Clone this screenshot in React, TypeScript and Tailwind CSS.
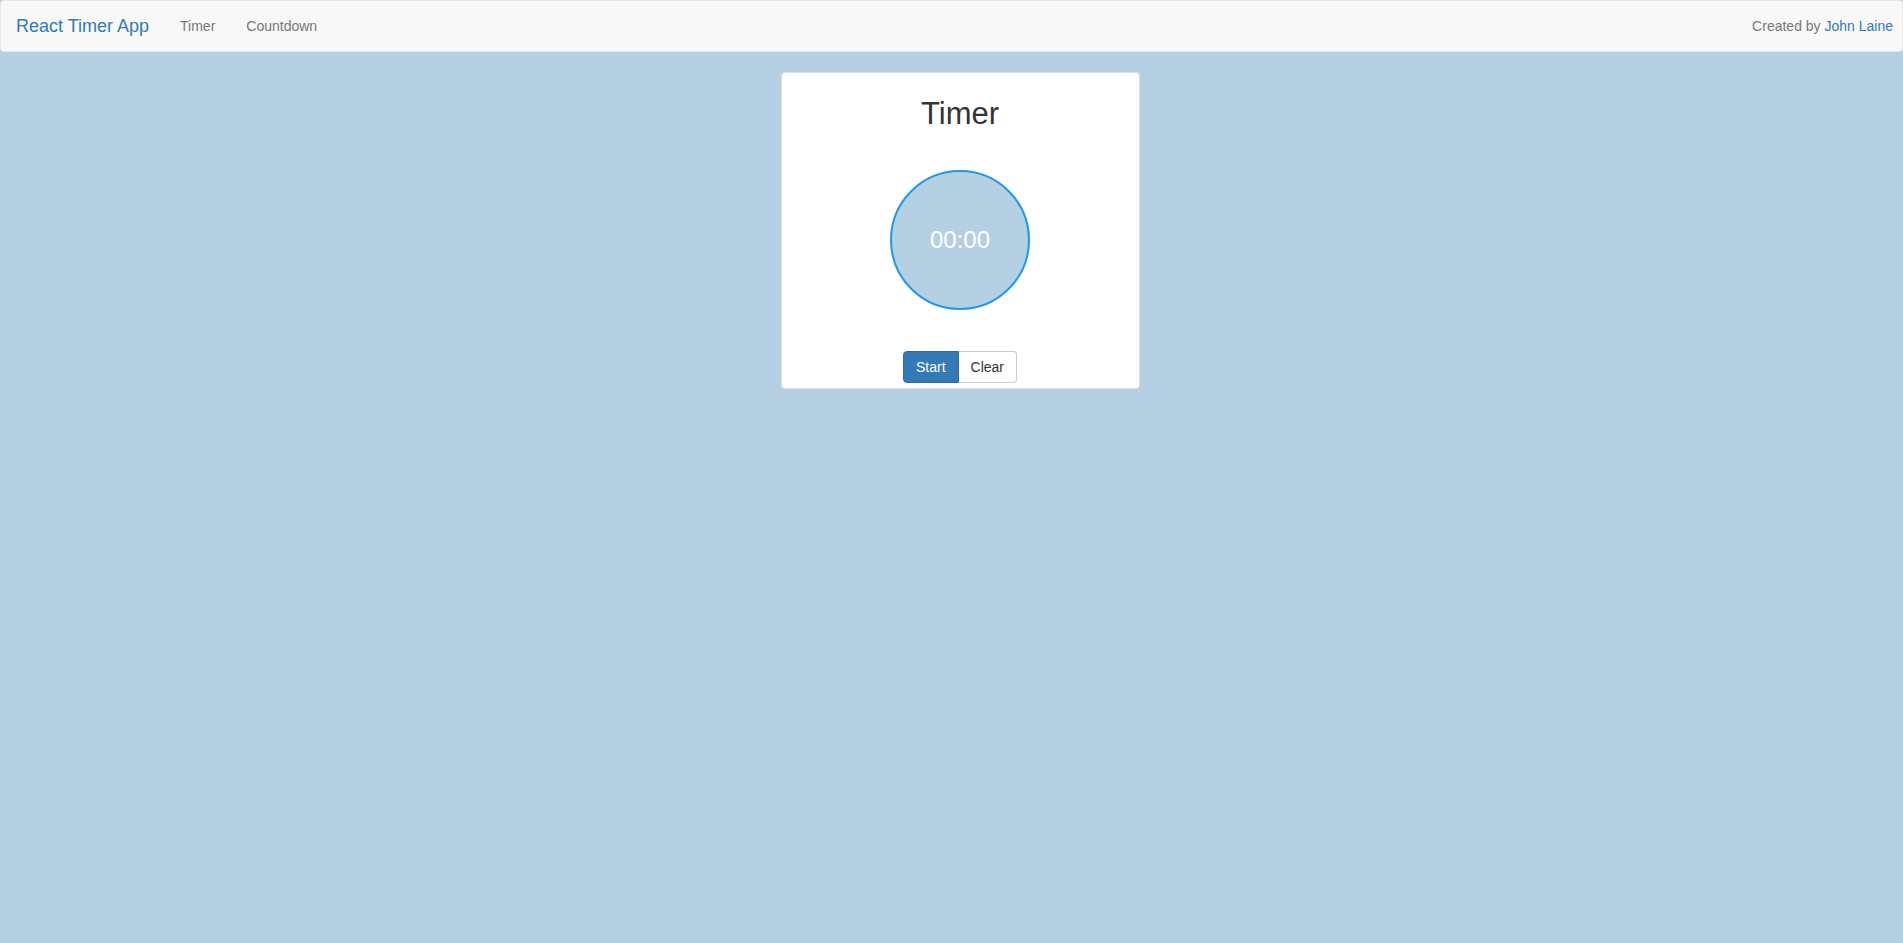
import React from "react";

function Navigation() {
  return (
    <nav className="flex h-[52px] items-center justify-between rounded-[4px] border border-[#e7e7e7] bg-[#f8f8f8]">
      <div className="flex items-center">
        <a className="px-[15px] text-[18px] text-[#337ab7]">React Timer App</a>
        <a className="pl-[16px] pr-[15px] text-[14px] text-[#777]">Timer</a>
        <a className="pl-[16px] pr-[15px] text-[14px] text-[#777]">Countdown</a>
      </div>
      <div className="pr-[9px] text-[14px] text-[#777]">
        Created by <a className="text-[#337ab7]">John Laine</a>
      </div>
    </nav>
  );
}

function App() {
  return (
    <div
      className="min-h-screen bg-[#b5d0e2]"
      style={{ fontFamily: '"Liberation Sans", Arial, sans-serif' }}
    >
      <Navigation />

      <div className="mt-[20px] flex justify-center pl-[17px]">
        <div className="flex w-[359px] flex-col items-center rounded-[4px] border border-[#ddd] bg-white pb-[5px] pt-[24px]">
          {/* Title */}
          <h1 className="text-[31px] leading-[34px] text-[#333]">Timer</h1>

          {/* Clock */}
          <div className="mt-[39px] flex h-[140px] w-[140px] items-center justify-center rounded-full border-2 border-[#2098e9] bg-[#b5d0e2]">
            <span className="text-[24px] text-white">00:00</span>
          </div>

          {/* Controls */}
          <div className="mt-[41px] flex">
            <button className="h-[32px] rounded-l-[4px] border border-[#2e6da4] bg-[#337ab7] px-[12px] text-[14px] text-white">
              Start
            </button>
            <button className="h-[32px] rounded-r-[4px] border border-l-0 border-[#ccc] bg-white px-[12px] text-[14px] text-[#333]">
              Clear
            </button>
          </div>
        </div>
      </div>
    </div>
  );
}

export default App;
